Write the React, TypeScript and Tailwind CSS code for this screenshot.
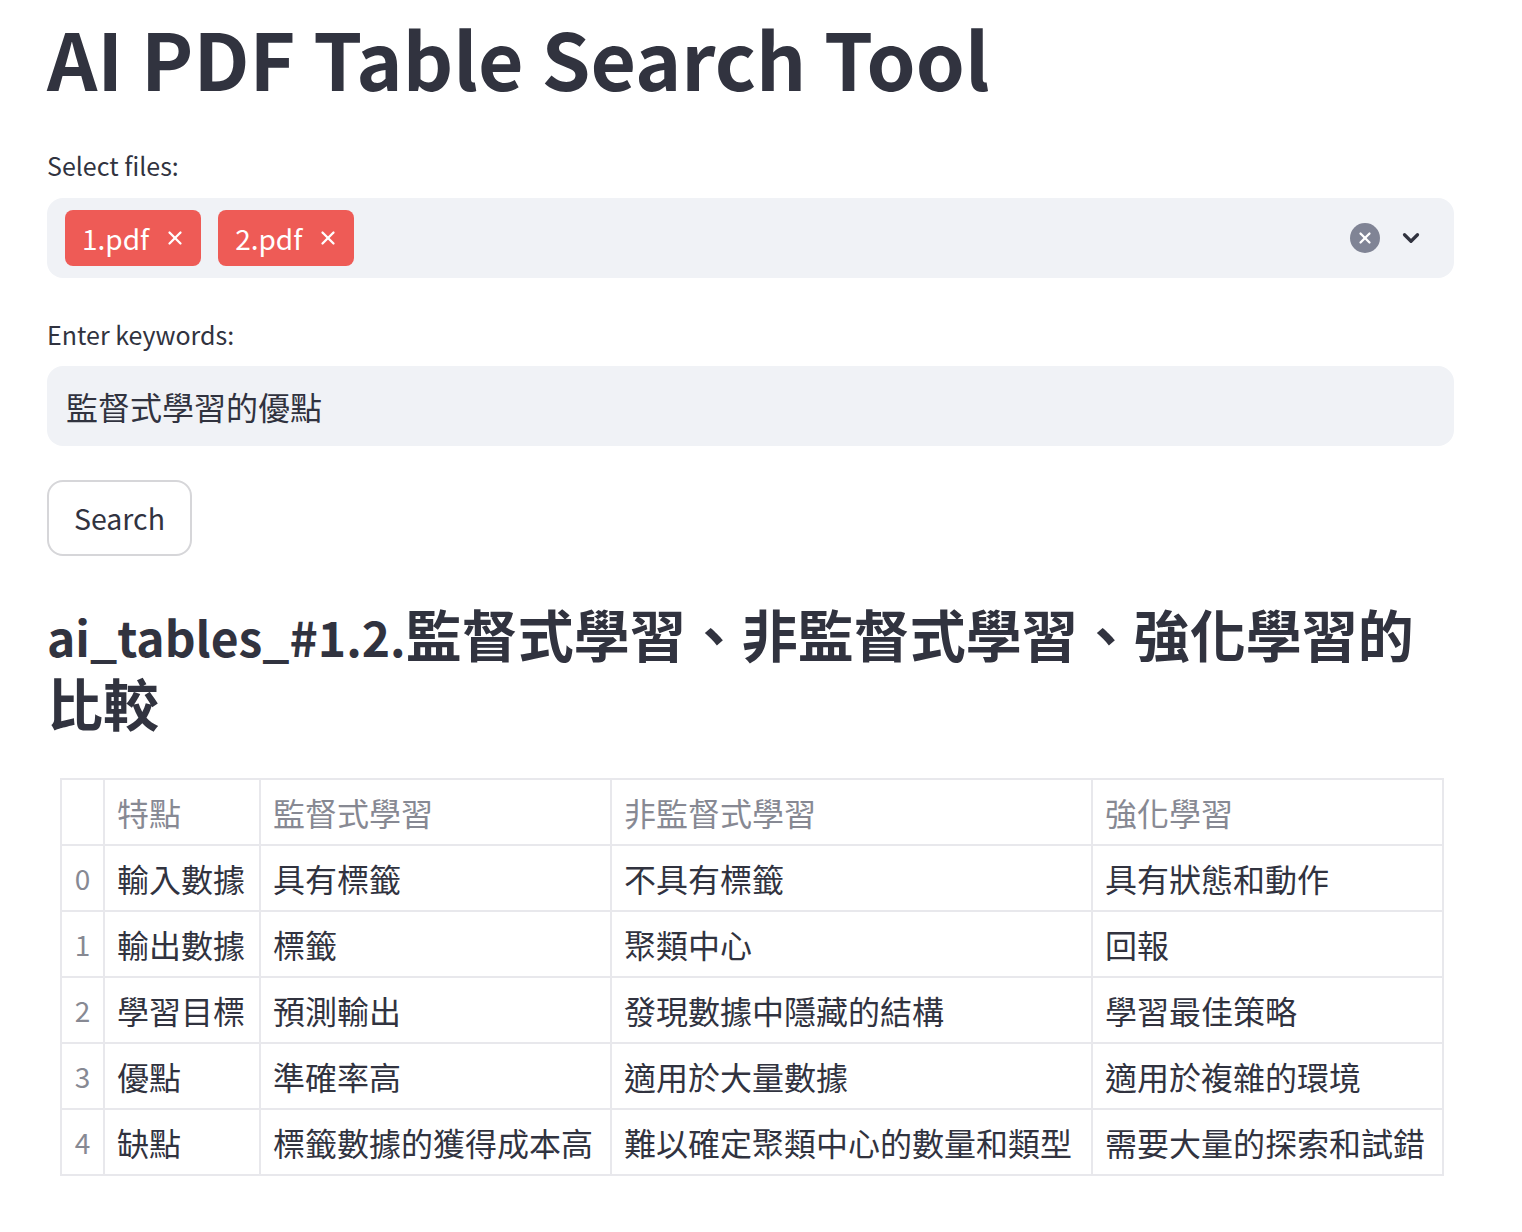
import { X, ChevronDown } from "lucide-react";

const font = { fontFamily: '"Noto Sans CJK TC", "Noto Sans", sans-serif' };

const rows = [
  ["輸入數據", "具有標籤", "不具有標籤", "具有狀態和動作"],
  ["輸出數據", "標籤", "聚類中心", "回報"],
  ["學習目標", "預測輸出", "發現數據中隱藏的結構", "學習最佳策略"],
  ["優點", "準確率高", "適用於大量數據", "適用於複雜的環境"],
  ["缺點", "標籤數據的獲得成本高", "難以確定聚類中心的數量和類型", "需要大量的探索和試錯"],
];

const headers = ["特點", "監督式學習", "非監督式學習", "強化學習"];
const widths = ["w-[156px]", "w-[351px]", "w-[481px]", "w-[351px]"];

function Tag({ label }: { label: string }) {
  return (
    <span className="flex h-[56px] items-center gap-[15px] rounded-[8px] bg-[#ee5b56] pl-[17px] pr-[15px] text-[28px] text-white">
      {label}
      <X size={22} strokeWidth={2.5} />
    </span>
  );
}

export default function App() {
  return (
    <div className="min-h-[1232px] bg-white text-[#31333f]" style={font}>
      <div className="ml-[47px] w-[1407px]">
        <h1 className="h-[106px] pt-[4px] text-[78.5px] font-bold leading-[106px]">
          AI PDF Table Search Tool
        </h1>

        <label className="mt-[39px] block h-[40px] text-[25px] leading-[40px]">Select files:</label>
        <div className="mt-[13px] flex h-[80px] items-center rounded-[16px] bg-[#f0f2f6] pl-[18px] pr-[30px]">
          <div className="flex flex-1 gap-[17px]">
            <Tag label="1.pdf" />
            <Tag label="2.pdf" />
          </div>
          <span className="flex h-[30px] w-[30px] items-center justify-center rounded-full bg-[#808495] text-white">
            <X size={18} strokeWidth={3} />
          </span>
          <ChevronDown className="ml-[18px]" size={26} strokeWidth={3} />
        </div>

        <label className="mt-[36px] block h-[40px] text-[25px] leading-[40px]">Enter keywords:</label>
        <div className="mt-[12px] flex h-[80px] items-center rounded-[16px] bg-[#f0f2f6] px-[19px] text-[32px]">
          監督式學習的優點
        </div>

        <button className="mt-[34px] flex h-[76px] items-center rounded-[16px] border-2 border-[#d6d6d9] bg-white px-[25px] text-[28.5px]">
          Search
        </button>

        <h2 className="mt-[44px] text-[56px] font-bold leading-[66px]">
          <span className="text-[48px]">ai_tables_#1.2.</span>監督式學習、非監督式學習、強化學習的比較
        </h2>

        <table className="mx-[13px] mt-[43px] w-[1382px] table-fixed border-collapse border-2 border-[#e8e8ec] text-[32px]">
          <thead>
            <tr className="h-[66px]">
              <th className="w-[43px] border-2 border-[#e8e8ec]"></th>
              {headers.map((h, i) => (
                <th
                  key={h}
                  className={`${widths[i]} border-2 border-[#e8e8ec] px-[12px] text-left font-normal text-[#878993]`}
                >
                  {h}
                </th>
              ))}
            </tr>
          </thead>
          <tbody>
            {rows.map((r, idx) => (
              <tr key={idx} className="h-[66px]">
                <td className="border-2 border-[#e8e8ec] text-center text-[28px] text-[#878993]">{idx}</td>
                {r.map((c, j) => (
                  <td key={j} className="whitespace-nowrap border-2 border-[#e8e8ec] px-[12px]">
                    {c}
                  </td>
                ))}
              </tr>
            ))}
          </tbody>
        </table>
      </div>
    </div>
  );
}
